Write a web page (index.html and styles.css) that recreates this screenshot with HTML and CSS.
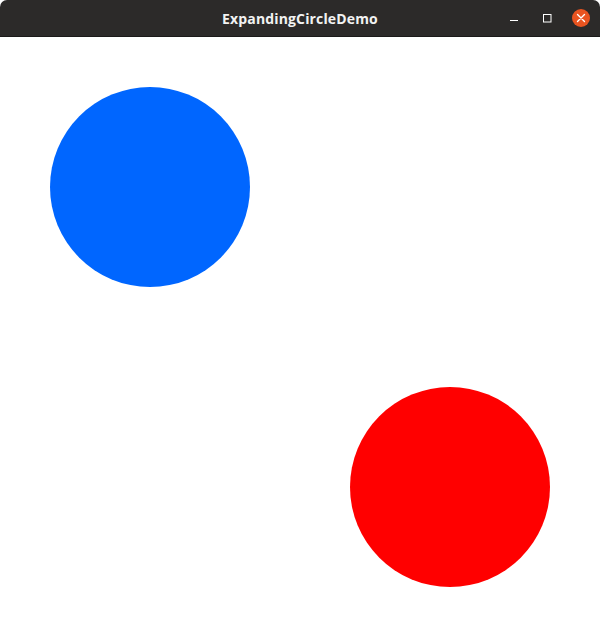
FILE: index.html
```html
<!DOCTYPE html>
<html>
<head>
<meta charset="utf-8">
<link rel="stylesheet" href="styles.css">
</head>
<body>
<div class="window">
  <div class="titlebar">
    <div class="title">ExpandingCircleDemo</div>
    <div class="controls">
      <span class="btn min"><svg width="10" height="10" viewBox="0 0 10 10"><rect x="1" y="7" width="8" height="1" fill="#ffffff"/></svg></span>
      <span class="btn max"><svg width="10" height="10" viewBox="0 0 10 10"><rect x="1.5" y="1.5" width="7.5" height="7.5" fill="none" stroke="#ffffff" stroke-width="1"/></svg></span>
      <span class="btn close"><svg width="18" height="18" viewBox="0 0 18 18"><circle cx="9" cy="9" r="9" fill="#e95420"/><path d="M5.5 5.5 L12.5 12.5 M12.5 5.5 L5.5 12.5" stroke="#ffffff" stroke-width="1.4" stroke-linecap="round"/></svg></span>
    </div>
  </div>
  <div class="canvas">
    <div class="circle blue"></div>
    <div class="circle red"></div>
  </div>
</div>
</body>
</html>
```
FILE: styles.css
```css
html, body {
  margin: 0;
  padding: 0;
  background: #ffffff;
}
.window {
  width: 600px;
  height: 637px;
  display: flex;
  flex-direction: column;
  overflow: hidden;
  border-radius: 7px 7px 0 0;
  background: #ffffff;
}
.titlebar {
  height: 36px;
  background: #2c2a29;
  border-bottom: 1px solid #1b1a19;
  position: relative;
  display: flex;
  align-items: center;
  justify-content: center;
  flex: none;
}
.title {
  color: #f2f2f2;
  font-family: "Open Sans", "DejaVu Sans", sans-serif;
  font-weight: 700;
  font-size: 14px;
  letter-spacing: 0.15px;
}
.controls {
  position: absolute;
  right: 10px;
  top: 0;
  height: 36px;
  display: flex;
  align-items: center;
  gap: 17px;
}
.btn {
  display: flex;
  align-items: center;
  justify-content: center;
}
.btn.min, .btn.max {
  width: 16px;
  height: 16px;
}
.btn.min {
  margin-top: 0;
}
.canvas {
  position: relative;
  flex: 1;
  background: #ffffff;
}
.circle {
  position: absolute;
  width: 200px;
  height: 200px;
  border-radius: 50%;
}
.blue {
  left: 50px;
  top: 50px;
  background: #0066ff;
}
.red {
  left: 350px;
  top: 350px;
  background: #ff0000;
}
```
